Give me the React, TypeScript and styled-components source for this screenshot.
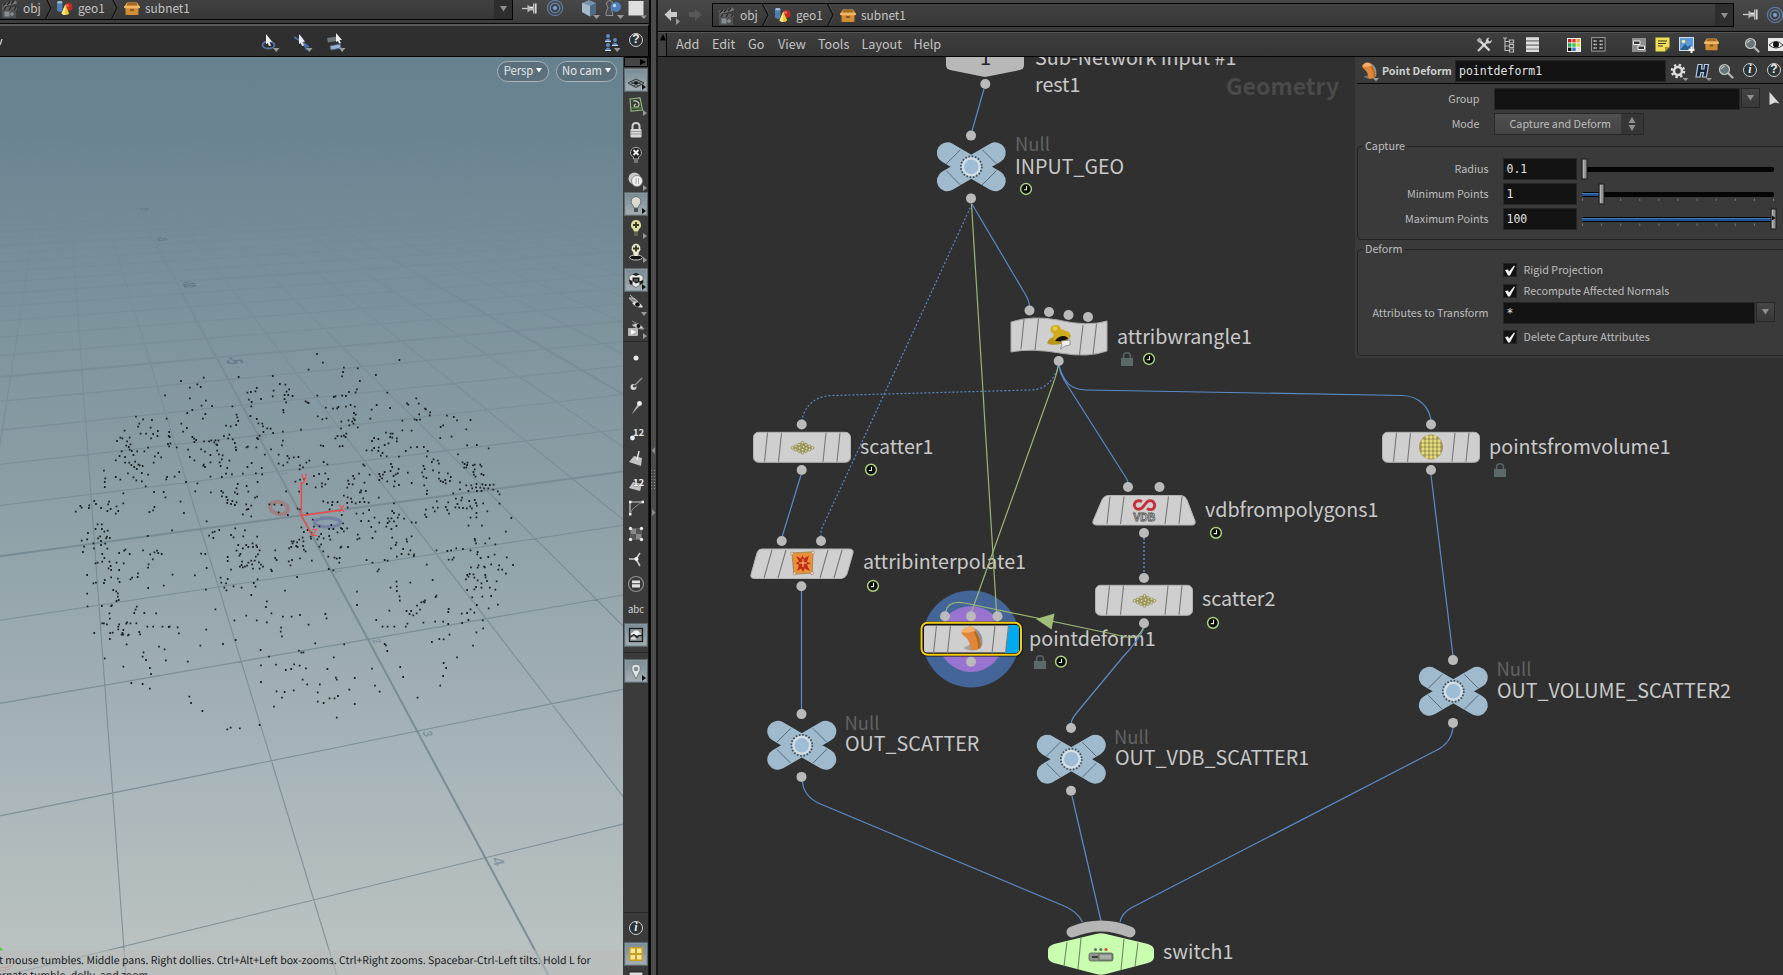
import React from "react";
import styled, { createGlobalStyle, css } from "styled-components";

const UI_FONT = `"Noto Sans CJK SC", "Noto Sans CJK JP", "Open Sans", sans-serif`;
const MONO_FONT = `"DejaVu Sans Mono", "Liberation Mono", monospace`;

const Global = createGlobalStyle`
  html, body { margin: 0; background: #303030; overflow: hidden; }
  * { box-sizing: border-box; }
  svg { display: block; }
`;

/* ---------- frame ---------- */
const Frame = styled.div`
  display: flex;
  width: 1783px;
  height: 975px;
  overflow: hidden;
  font-family: ${UI_FONT};
  color: #c4c4c4;
  background: #303030;
`;
const LeftPane = styled.section`
  width: 649px;
  flex: none;
  display: flex;
  flex-direction: column;
  background: #3a3a3a;
`;
const Splitter = styled.div`
  width: 9px;
  flex: none;
  background: #4b4b4b;
  border-left: 2px solid #080808;
  border-right: 2px solid #161616;
  display: flex;
  flex-direction: column;
  align-items: center;
  padding-top: 446px;
`;
const RightPane = styled.section`
  flex: 1;
  min-width: 0;
  display: flex;
  flex-direction: column;
`;

/* ---------- path bars ---------- */
const PathBar = styled.header<{ $h: number }>`
  height: ${(p) => p.$h}px;
  flex: none;
  display: flex;
  align-items: flex-start;
  background: linear-gradient(#484848, #3c3c3c);
  border-bottom: 1px solid #0a0a0a;
  overflow: hidden;
`;
const PathField = styled.div<{ $w: number; $top: number; $ml: number }>`
  display: flex;
  align-items: center;
  width: ${(p) => p.$w}px;
  height: 24px;
  flex: none;
  margin: ${(p) => p.$top}px 0 0 ${(p) => p.$ml}px;
  border: 1px solid #050505;
  background: linear-gradient(#424242, #373737);
  font-size: 11.9px;
  line-height: 18px;
  white-space: nowrap;
`;
const Crumb = styled.div<{ $w: number; $pl: number }>`
  display: flex;
  align-items: center;
  gap: 5px;
  width: ${(p) => p.$w}px;
  padding-left: ${(p) => p.$pl}px;
  flex: none;
`;
const CrumbText = styled.span`
  margin-bottom: 1px;
`;
const Drop = styled.div`
  margin-left: auto;
  width: 18px;
  height: 100%;
  background: #2e2e2e;
  display: flex;
  align-items: center;
  justify-content: center;
`;
const IconSlot = styled.div<{ $ml?: number; $mt?: number }>`
  flex: none;
  margin-left: ${(p) => p.$ml ?? 0}px;
  margin-top: ${(p) => p.$mt ?? 0}px;
`;

/* ---------- left pane ---------- */
const SelectBar = styled.div`
  height: 33px;
  flex: none;
  display: flex;
  background: #2f2f2f;
  border-top: 2px solid #5a5a5a;
  border-bottom: 1px solid #050505;
  border-right: 1px solid #050505;
  overflow: hidden;
`;
const ViewRow = styled.div`
  flex: 1;
  display: flex;
  min-height: 0;
`;
const Viewport = styled.div`
  width: 623px;
  flex: none;
  display: flex;
  flex-direction: column;
  justify-content: space-between;
  position: relative;
  overflow: hidden;
  background: linear-gradient(#67818e 0%, #6a8491 8%, #748d98 20%, #7f959e 31%, #8c9ea6 48%, #9aa9af 62%, #a8b5ba 78%, #b2bcbd 88%, #bcc3c3 100%);
`;
const Scene = styled.svg`
  position: absolute;
  inset: 0;
`;
const CamRow = styled.div`
  position: relative;
  display: flex;
  justify-content: flex-end;
  gap: 7px;
  padding: 4px 6px 0 0;
`;
const CamPill = styled.div<{ $w: number }>`
  width: ${(p) => p.$w}px;
  height: 21px;
  border: 1.5px solid #a9b4b9;
  border-radius: 11px;
  background: rgba(80, 98, 108, 0.55);
  color: #e4e8ea;
  font-size: 11.3px;
  line-height: 16px;
  padding-bottom: 3px;
  display: flex;
  align-items: center;
  justify-content: center;
  gap: 3px;
  white-space: nowrap;
`;
const Hint = styled.div`
  position: relative;
  height: 25px;
  overflow: hidden;
  background: rgba(184, 188, 186, 0.55);
  color: #16191a;
  font-size: 10.5px;
  text-rendering: geometricPrecision;
  line-height: 15px;
  padding-top: 3px;
  white-space: nowrap;
`;
const HintLine = styled.div<{ $x: number }>`
  margin-left: ${(p) => p.$x}px;
`;
const Tools = styled.div`
  width: 26px;
  flex: none;
  display: flex;
  flex-direction: column;
  background: #3b3b3b;
  border-right: 1px solid #161616;
  padding-left: 1px;
  overflow: hidden;
`;
const ToolHead = styled.div`
  height: 10px;
  flex: none;
  border: 1px solid #0a0a0a;
  background: #454545;
  display: flex;
  justify-content: flex-end;
  align-items: center;
`;
const Tool = styled.div<{ $gap?: number; $on?: boolean }>`
  position: relative;
  height: 24px;
  flex: none;
  margin-top: ${(p) => p.$gap ?? 1}px;
  width: 24px;
  display: flex;
  align-items: center;
  justify-content: center;
  ${(p) =>
    p.$on &&
    css`
      background: linear-gradient(#788b96, #a5b0b4);
      border: 1px solid #5d676c;
      box-shadow: inset 0 0 0 1px #8898a0;
    `}
`;
const Caret = styled.i<{ $dir?: "r" | "d"; $dark?: boolean }>`
  position: absolute;
  right: 1px;
  bottom: ${(p) => (p.$dir === "d" ? -1 : 1)}px;
  width: 0;
  height: 0;
  ${(p) =>
    p.$dir === "d"
      ? css`
          border: 3px solid transparent;
          border-top: 4px solid #9a9a9a;
          border-bottom: 0;
        `
      : css`
          border: 3px solid transparent;
          border-left: 4px solid ${p.$dark ? "#141414" : "#9a9a9a"};
          border-right: 0;
        `}
`;
const ToolRule = styled.div<{ $mt: number }>`
  height: 1px;
  flex: none;
  margin-top: ${(p) => p.$mt}px;
  background: #282828;
`;
const ToolText = styled.span`
  font-size: 9.6px;
  line-height: 14px;
  color: #d2d2d2;
`;

/* ---------- network pane ---------- */
const MenuBar = styled.nav`
  height: 25px;
  flex: none;
  display: flex;
  align-items: center;
  background: linear-gradient(#3e3e3e, #353535);
  border-bottom: 1px solid #050505;
  border-top: 1px solid #555;
  font-size: 12.6px;
  line-height: 18px;
`;
const MenuGrip = styled.div`
  width: 10px;
  height: 100%;
  border-right: 1px solid #080808;
  background: #404040;
  padding: 1px 0 0 2px;
`;
const MenuItem = styled.span<{ $w: number }>`
  width: ${(p) => p.$w}px;
  flex: none;
  margin-bottom: 1px;
`;
const Canvas = styled.div`
  flex: 1;
  position: relative;
  overflow: hidden;
  background: #303030;
`;
const Wires = styled.svg`
  position: absolute;
  left: -658px;
  top: -57px;
`;
const Label = styled.span<{ $x: number; $b: number; $tone?: "dim" | "ctx" }>`
  position: absolute;
  left: ${(p) => p.$x - 658}px;
  top: ${(p) => p.$b - 57 - (p.$tone === "ctx" ? 24 : 22.6)}px;
  font-size: ${(p) => (p.$tone === "dim" ? 18.4 : p.$tone === "ctx" ? 23.1 : 19.7)}px;
  font-weight: ${(p) => (p.$tone === "ctx" ? 700 : 400)};
  line-height: 28px;
  color: ${(p) => (p.$tone === "dim" ? "#626262" : p.$tone === "ctx" ? "#4a4a4a" : "#c9c9c9")};
  white-space: nowrap;
`;

/* ---------- parameter panel ---------- */
const Panel = styled.aside`
  position: absolute;
  left: 697px;
  top: 0;
  width: 428px;
  height: 301px;
  background: #3a3a3a;
  padding-left: 2px;
  font-size: 10.75px;
  line-height: 16px;
  color: #bdbdbd;
`;
const PanelHead = styled.div`
  height: 27px;
  display: flex;
  align-items: flex-start;
  border-bottom: 1px solid #070707;
`;
const PanelTitle = styled.b`
  width: 73px;
  margin: 6px 0 0 2px;
  color: #d0d0d0;
  font-size: 10.7px;
  white-space: nowrap;
`;
const Input = styled.div<{ $w: number; $h?: number }>`
  width: ${(p) => p.$w}px;
  height: ${(p) => p.$h ?? 22}px;
  flex: none;
  background: #131313;
  border: 1px solid #262626;
  color: #e2e2e2;
  font-family: ${MONO_FONT};
  font-size: 11.5px;
  line-height: 20px;
  padding-left: 3px;
`;
const Row = styled.div<{ $h: number; $mt?: number }>`
  display: flex;
  align-items: center;
  height: ${(p) => p.$h}px;
  margin-top: ${(p) => p.$mt ?? 0}px;
`;
const Name = styled.span<{ $w: number; $gap: number }>`
  width: ${(p) => p.$w}px;
  margin-right: ${(p) => p.$gap}px;
  flex: none;
  text-align: right;
  white-space: nowrap;
`;
const SmallButton = styled.div`
  width: 19px;
  height: 20px;
  flex: none;
  margin: 0 0 3px 1px;
  border: 1px solid #272727;
  background: linear-gradient(#454545, #383838);
  display: flex;
  align-items: center;
  justify-content: center;
`;
const Combo = styled.div`
  width: 150px;
  height: 22px;
  border: 1px solid #282828;
  background: linear-gradient(#505050, #434343);
  display: flex;
  align-items: center;
  justify-content: space-between;
  padding-left: 15px;
`;
const ComboStep = styled.div`
  width: 22px;
  height: 100%;
  background: #363636;
  display: flex;
  align-items: center;
  justify-content: center;
`;
const Group = styled.fieldset<{ $h: number; $mt: number }>`
  margin: ${(p) => p.$mt}px -6px 0 0;
  height: ${(p) => p.$h}px;
  padding: 0;
  border: 1px solid #222;
  border-radius: 4px;
  min-width: 0;
`;
const Legend = styled.legend`
  margin-left: 5px;
  padding: 0 2px;
  height: 15px;
  line-height: 14px;
`;
const Slider = styled.div`
  width: 198px;
  height: 22px;
  margin-left: 4px;
  flex: none;
`;
const Check = styled.div`
  width: 14px;
  height: 14px;
  flex: none;
  background: #121212;
  border: 1px solid #232323;
  margin-right: 7px;
`;

/* ---------- shared glyphs ---------- */
const Down = ({ s = 7, c = "#8f8f8f" }: { s?: number; c?: string }) => (
  <svg width={s} height={s}>
    <path d={`M0 1H${s}L${s / 2} ${s - 0.5}Z`} fill={c} />
  </svg>
);
const ObjIcon = () => (
  <svg width="17" height="19" viewBox="0 0 17 19">
    <path d="M1 5L15 1.5L16 4.5L2 8Z" fill="#777" />
    <path d="M2 6.5L5 4M6 6L9 3M10 5L13 2" stroke="#222" strokeWidth="1.4" />
    <rect x="1" y="8" width="15" height="3" fill="#5e5e5e" />
    <path d="M3 11L5 8M8 11L10 8M13 11L15 8" stroke="#222" strokeWidth="1.2" />
    <rect x="1" y="11" width="14" height="8" fill="#4e5254" />
    <rect x="3.5" y="12.5" width="5" height="5" fill="#888f92" />
    <path d="M9 15H13M11 13V17" stroke="#8b9194" strokeWidth="1.4" />
  </svg>
);
const GeoIcon = () => (
  <svg width="17" height="16" viewBox="0 0 17 16">
    <path d="M1 2.5Q3.5 0 6.5 2V11Q4 13 1 10.5Z" fill="#4d7fb5" />
    <ellipse cx="3.8" cy="2.3" rx="2.7" ry="1.3" fill="#9fc0de" />
    <circle cx="12.5" cy="7" r="4" fill="#c22d22" />
    <circle cx="11.5" cy="5.5" r="1.3" fill="#e57e70" />
    <path d="M9.3 4.5L13.2 13.5Q9.5 16.5 5.5 13.5Z" fill="#edc932" />
    <path d="M9.3 4.5L9 15Q7 15 5.5 13.5Z" fill="#f7e68a" />
  </svg>
);
const BoxIcon = ({ w = 16 }: { w?: number }) => (
  <svg width={w} height={(w * 13) / 16} viewBox="0 0 16 13">
    <path d="M3 0.5H13L16 5H0Z" fill="#e7aa56" />
    <path d="M3.5 1H12.5L13.5 3.5H2.5Z" fill="#a8671e" />
    <rect x="1.5" y="5" width="13" height="8" rx="1" fill="#d18d34" />
    <rect x="0" y="4" width="16" height="2.3" rx="1" fill="#efb766" />
    <rect x="6" y="7" width="4" height="2" rx="0.8" fill="#8a531c" />
  </svg>
);
const Chevron = () => (
  <svg width="7" height="22">
    <path d="M0.5 0L6 11L0.5 22" fill="none" stroke="#111" strokeWidth="1.3" />
    <path d="M1.8 0L7.3 11L1.8 22" fill="none" stroke="#555" strokeWidth="0.6" />
  </svg>
);
const PinIcon = () => (
  <svg width="17" height="13" viewBox="0 0 17 13">
    <path d="M0 6.5H6" stroke="#ccc" strokeWidth="1.3" />
    <path d="M5.5 2.5V10.5L8 8.5H11V11.5H12.5V1.5H11V4.5H8Z" fill="#b9b9b9" />
    <path d="M13.8 1.5V11.5" stroke="#d8d8d8" strokeWidth="1.6" />
    <path d="M8 5.5H11" stroke="#eee" />
  </svg>
);
const TargetIcon = () => (
  <svg width="18" height="18" viewBox="0 0 18 18" fill="none">
    <circle cx="9" cy="9" r="7.6" stroke="#5d7ba3" strokeWidth="1.2" />
    <circle cx="9" cy="9" r="4.8" stroke="#6286b5" strokeWidth="1.3" />
    <circle cx="9" cy="9" r="2" fill="#79a3d8" />
  </svg>
);
const Magnifier = () => (
  <svg width="16" height="16" viewBox="0 0 16 16">
    <path d="M9.5 9.5L14.5 14.5" stroke="#b5b5b5" strokeWidth="2.2" strokeLinecap="round" />
    <circle cx="6.5" cy="6.5" r="5" fill="#66757a" stroke="#c9c9c9" strokeWidth="1.2" />
    <path d="M3.6 6Q4 3.7 6.5 3.4" stroke="#dfe8ea" fill="none" />
  </svg>
);
const RoundGlyph = styled.div<{ $italic?: boolean }>`
  width: 14px;
  height: 14px;
  border-radius: 50%;
  border: 1.3px solid #d0d0d0;
  background: #2b3336;
  color: #eee;
  font-family: ${(p) => (p.$italic ? `"Liberation Serif", serif` : `"Liberation Sans", sans-serif`)};
  font-style: ${(p) => (p.$italic ? "italic" : "normal")};
  font-size: 12px;
  font-weight: 700;
  line-height: 11px;
  text-align: center;
`;

/* ---------- 3D view ---------- */
type P = [number, number];
const W = (x: number, z: number) => 1 + 0.0275 * x - 0.1081 * z;
const project = (x: number, z: number): P => {
  const w = W(x, z);
  return [(301.3 + 106 * x - 6.46 * z) / w, (515.3 + 0.9 * x - 7.1 * z) / w - 57];
};
const seg = (a: P, b: P) => `M${a[0].toFixed(1)} ${a[1].toFixed(1)}L${b[0].toFixed(1)} ${b[1].toFixed(1)}`;
let minor = "";
let major = "";
for (let x = -25; x <= 90; x++) {
  const near = Math.min(7, (0.9 + 0.0275 * x) / 0.1081);
  const d = seg(project(x, -110), project(x, near));
  if (x % 5 === 0) major += d;
  else minor += d;
}
for (let z = -75; z <= 6; z++) {
  const left = Math.max(-25, (0.1081 * z - 0.9) / 0.0275);
  const d = seg(project(left, z), project(100, z));
  if (z % 5 === 0) major += d;
  else minor += d;
}

const SAMPLES =
  "753,72 767,98 949,90 733,119 817,113 850,115 893,135 815,126 813,139 648,138 567,141 484,143 430,153 469,163 477,171 451,173 392,196 451,205 489,212 855,153 848,178 845,187 829,186 920,188 665,162 678,164 687,178 681,185 685,195 676,207 680,217 650,182 648,199 610,174 607,184 596,186 588,188 591,209 598,216 597,229 620,207 695,198 676,195 730,217 726,214 733,219 754,197 793,201 797,199 813,197 822,198 989,205 967,220 970,224 995,221 1010,236 1012,238 1022,247 1021,256 1062,257 1078,261 1086,271 1118,270 1108,298 1073,320 1053,286 1047,291 1046,324 504,228 479,227 457,240 445,249 488,252 482,266 552,229 595,258 562,254 564,262 566,273 561,285 610,267 614,280 623,281 625,289 635,295 643,296 649,309 626,306 617,317 611,324 613,327 673,240 674,247 672,305 715,299 672,332 670,346 683,378 644,358 662,374 629,374 609,352 589,350 545,314 548,289 537,287 532,318 542,325 553,328 558,339 560,352 561,360 586,352 323,260 340,268 361,270 331,281 328,290 358,293 396,266 431,281 444,294 435,305 402,306 375,303 364,312 374,318 359,325 347,311 334,311 296,302 286,323 291,325 308,323 278,333 302,334 310,343 306,351 308,359 313,363 300,347 289,364 284,378 297,381 317,375 326,364 352,353 343,364 376,369 368,379 383,382 365,398 339,408 329,404 332,406 321,395 319,411 325,417 312,405 307,398 297,398 275,391 247,422 250,445 249,456 249,471 275,441 286,449 304,430 317,442 337,429 324,451 337,454 346,469 352,434 399,342 402,349 405,340 403,321 401,318 420,352 447,359 451,381 462,336 457,321 461,326 466,330 485,334 502,331 512,331 497,334 509,337 514,343 516,345 519,332 478,358 487,365 516,362 529,376 500,375 520,373 527,388 522,397 500,397 524,408 545,392 540,414 487,411 483,407 484,404 462,391 426,426 415,440 397,441 395,448 442,456 469,460 464,484 500,440 527,441 537,431 551,433 577,431 588,411 598,399 622,414 623,433 608,430 612,456 586,468 590,485 611,500 606,503 565,462 562,475 558,487 564,492 530,488 526,483 501,487 527,499 538,501 541,510 540,519 552,513 549,522 562,517 558,525 585,523 597,527 590,537 577,553 597,559 586,539 755,259 766,268 776,265 774,233 791,236 801,235 804,231 833,225 822,230 843,230 841,249 845,254 840,265 843,270 828,271 837,275 840,281 830,286 850,292 811,275 810,295 817,317 823,311 821,321 811,319 802,318 797,325 762,346 768,348 807,349 814,348 883,239 880,266 895,225 927,234 985,268 990,270 998,269 996,253 956,272 956,301 978,302 917,308 928,311 933,311 927,321 932,323 943,325 943,334 899,327 889,324 884,333 923,340 914,345 900,352 889,354 884,361 899,363 909,369 905,377 871,361 919,379 948,380 964,363 976,352 991,351 1007,351 1016,363 1014,379 1026,396 1030,388 1040,392 1043,401 1006,408 1009,417 1003,427 1029,421 1043,428 1064,430 1110,346 1133,345 1161,355 1088,373 1099,397 1104,402 1111,398 1108,412 1103,413 1110,405 1124,406 1128,404 1141,404 1144,409 1128,418 1125,426 1126,434 1130,440 1144,432 1149,435 1013,444 1006,440 1008,466 1015,482 1014,492 1043,446 1047,453 1053,456 1059,460 1058,450 1069,453 1071,441 1093,457 1108,466 1120,466 1132,462 1146,463 1154,465 1131,472 1141,473 1150,475 1144,483 1160,475 1164,465 1173,464 1172,479 1183,484 1187,493 1122,475 1133,483 1113,483 1093,478 1077,490 1098,503 1187,521 1083,506 1096,511 1087,522 1082,532 1091,533 1100,534 1109,535 1117,529 1121,535 1115,513 1128,510 1131,519 1133,527 1148,520 1065,517 1038,514 1059,531 1063,540 1040,533 1029,533 1033,544 1012,539 1067,551 1132,549 1158,544 1132,562 1118,563 1113,587 1215,564 1202,605 1145,587 929,402 932,411 928,423 914,426 947,417 969,428 945,430 940,433 935,438 910,434 901,432 903,439 908,445 901,450 920,454 938,454 936,469 978,459 948,465 900,503 863,403 866,407 878,434 853,431 839,438 842,446 827,452 829,462 838,463 866,458 825,473 858,481 857,487 869,483 817,497 826,502 834,506 855,487 863,505 866,516 855,516 876,518 845,520 836,516 826,533 825,519 802,516 790,516 789,525 779,518 768,514 783,538 769,396 778,403 773,430 758,432 746,438 780,447 773,463 765,460 765,470 750,472 729,462 713,449 723,447 702,455 712,418 720,412 713,406 709,381 698,382 735,392 728,398 687,385 683,397 673,406 662,401 680,484 711,485 652,524 669,525 640,523 662,547 684,555 707,536 713,538 730,550 743,569 746,590 759,589 731,600 740,608 738,620 787,585 782,597 792,597 810,594 813,597 815,580 825,595 817,604 802,607 763,612 782,618 769,625 785,629 754,628 758,620 763,643 759,650 739,626 719,623 722,606 716,592 812,555 847,551 863,550 877,540 858,573 850,614 854,625 876,573 890,563 882,591 892,605 901,578 936,520 932,543 936,549 922,565 930,565 948,554 945,563 960,566 936,574 925,574 921,579 918,590 942,588 930,597 978,577 988,578 1010,554 1013,561 932,623 942,638 940,645 929,655 966,628 967,635 885,624 849,628 978,619 293,490 259,515 224,513 228,522 212,526 191,528 211,534 194,533 180,545 240,534 257,523 255,543 263,537 277,529 281,543 275,551 293,520 366,486 389,486 393,502 429,515 367,531 364,541 355,546 437,549 409,601 491,574 521,600 510,605 505,607 497,617 507,624 559,595 549,615 555,622 578,619 582,601 232,583 242,583 242,597 227,597 209,609 256,602 248,605 238,619 254,620 233,625 252,625 261,624 240,633 240,645 207,628 194,632 222,640 200,650 197,666 223,655 250,641 255,656 243,672 248,684 283,669 295,662 298,659 308,672 294,700 277,698 260,695 263,708 258,715 264,720 283,720 243,695 227,700 232,698 207,735 222,760 228,758 249,750 247,759 264,742 280,746 284,756 269,780 276,784 280,790 282,810 207,791 208,829 351,618 340,661 357,673 367,667 373,662 376,669 384,672 363,688 352,713 353,703 327,741 328,730 310,748 314,743 352,774 389,767 410,734 463,736 478,671 488,672 491,714 489,779 524,743 526,758 537,760 541,747 533,773 538,781 555,769 574,773 603,759 612,748 607,770 597,795 549,719 541,693 541,681 570,710 574,705 575,695 577,712 582,710 587,707 590,698 597,692 599,703 601,716 605,692 620,704 617,716 625,710 615,697 608,680 613,673 617,661 611,651 601,651 590,651 585,645 577,655 562,662 569,677 571,672 566,645 600,640 611,620 609,646 654,661 654,684 657,690 686,694 694,690 690,706 646,723 644,719 706,741 677,782 741,692 713,685 687,655 692,651 693,634 698,634 706,637 711,629 707,651 704,648 720,648 721,634 722,659 726,664 695,640 781,717 792,721 795,683 807,684 800,686 806,698 780,680 768,664 827,651 811,650 809,653 871,690 885,698 900,718 897,724 914,690 943,680 954,672 958,657 971,673 984,673 983,678 921,692 975,661 1037,661 1063,663 1066,689 1078,683 1084,655 1072,661 1100,657 1118,661 1135,666 1131,640 1128,627 1129,632 1153,640 1163,625 1177,643 1014,704 1075,689 1134,673 1142,684 1160,681 1175,674 1204,682 1219,705 1186,706 1184,719 1193,719 1202,731 1167,703 1150,710 1152,712 1153,735 1137,706 1135,713 1119,712 1116,732 1113,740 1107,748 1110,735 1125,733 1127,743 1135,751 1154,742 1157,753 1144,760 1180,754 1177,779 1164,773 1144,773 1127,778 1131,771 1110,780 1122,802 1146,800 1167,798 1183,824 1161,835 1133,825 1118,838 1127,848 1147,871 1113,870 1110,849 1098,879 1097,851 1066,837 1065,846 1065,882 1148,895 1132,907 1068,914 1124,947 1028,750 975,758 942,755 943,769 928,773 943,783 949,799 950,812 925,842 966,843 977,843 982,856 973,852 990,850 998,839 991,827 1001,817 1006,815 1010,811 1009,817 1037,797 1035,801 1034,875 1053,875 1006,878 968,881 964,890 937,890 921,890 909,890 894,870 848,785 848,825 280,800 277,813 242,828 264,828 266,826 325,830 322,839 319,849 343,849 371,850 260,850 261,866 247,880 243,880 254,883 283,883 281,890 300,881 302,877 310,880 324,880 281,898 293,900 289,914 293,914 304,916 306,914 291,909 268,908 262,909 261,927 224,909 301,943 331,906 333,913 350,890 364,890 386,890 403,890 401,891 422,892 425,910 378,950 391,958 512,838 490,899 557,871 560,930 530,942 476,947 634,814 632,831 585,857 610,871 645,850 672,860 693,860 713,855 733,884 773,852 776,865 634,877 668,893 667,905 670,919 619,960 749,940 818,943 914,942 917,946 920,963 1026,936 1044,927 1054,928 710,962 716,968 721,967 341,967 339,980 347,990 249,985 639,980 793,982 1086,982";
const LOWER =
  "394,46 446,50 293,65 356,69 359,87 312,114 339,117 356,131 450,155 454,174 481,198 540,253 548,248 570,250 617,240 800,218 620,61 656,59 679,75 692,72 699,58 712,62 727,70 778,72 884,71 951,66 958,96 1054,54 1060,69 1053,93 1046,122 992,158 902,140 891,122 843,99 830,134 843,177 798,98 800,104 803,153 795,160 783,160 769,174 755,170 755,142 760,118 730,118 719,104 657,139 676,141 698,136 670,158 651,185 620,111";
const dots = (list: string, y0: number) =>
  list
    .split(" ")
    .map((s) => {
      const [x, y] = s.split(",").map(Number);
      return `M${(x / 2.376 - 0.85).toFixed(1)} ${(y / 3 + y0 - 0.9).toFixed(1)}h1.7v1.8h-1.7z`;
    })
    .join("");
const POINTS = dots(SAMPLES, 273) + dots(LOWER, 588);

/* a number lying on the ground plane next to the z axis, read along +z */
const GroundNum = ({ z, k, t, c = "#6a7f91", o: alpha = 0.8 }: { z: number; k: number; t: string; c?: string; o?: number }) => {
  const x0 = k * 3;
  const z0 = z + k * 1.5;
  const o = project(x0, z0);
  const dz = project(x0, z0 + 0.1);
  const dx = project(x0 + 0.1, z0);
  const m = [(dz[0] - o[0]) * 10 * k, (dz[1] - o[1]) * 10 * k, (o[0] - dx[0]) * 10 * k, (o[1] - dx[1]) * 10 * k, o[0], o[1]];
  return (
    <text
      transform={`matrix(${m.map((v) => v.toFixed(4)).join(" ")})`}
      fontSize="10"
      fontFamily="Liberation Sans"
      fontWeight="bold"
      fill={c}
      opacity={alpha}
    >
      {t}
    </text>
  );
};

const View3D = () => (
  <Scene width="623" height="918" viewBox="0 0 623 918">
    <defs>
      <linearGradient id="haze" x1="0" y1="0" x2="0" y2="918" gradientUnits="userSpaceOnUse">
        <stop offset="0.085" stopColor="#fff" stopOpacity="0" />
        <stop offset="0.13" stopColor="#fff" stopOpacity="0.28" />
        <stop offset="0.25" stopColor="#fff" stopOpacity="0.6" />
        <stop offset="0.5" stopColor="#fff" stopOpacity="1" />
      </linearGradient>
      <mask id="fade">
        <rect width="623" height="918" fill="url(#haze)" />
      </mask>
    </defs>
    <g mask="url(#fade)" fill="none" stroke="#748892">
      <path d={minor} strokeWidth="1.1" opacity="0.85" />
      <path d={major} strokeWidth="2" opacity="0.9" />
    </g>
    <GroundNum z={-20} k={0.036} t="-20" c="#546c79" />
    <GroundNum z={-15} k={0.036} t="-15" c="#546c79" />
    <GroundNum z={-10} k={0.036} t="-10" c="#566e7d" />
    <GroundNum z={-5} k={0.036} t="-5" c="#5d7389" />
    {[-4, -3, -2, -1, 1, 2, 3, 4].map((z) => (
      <GroundNum key={z} z={z} k={0.0092} t={String(z)} o={0.6} />
    ))}
    <ellipse cx="279" cy="451" rx="9" ry="6" fill="none" stroke="#a8706f" strokeWidth="4" opacity="0.65" transform="rotate(14 279 451)" />
    <ellipse cx="327.5" cy="465.5" rx="13" ry="4.5" fill="none" stroke="#6a71a0" strokeWidth="3.4" opacity="0.65" />
    <path d={POINTS} fill="#1c2022" />
    <g stroke="#f04b4b" strokeWidth="1.5" fill="none">
      <path d="M301.3 425V458.6L342 453M301.3 458.6L312 478" />
    </g>
    <g fill="#f04b4b" fontSize="12" fontFamily="Liberation Sans">
      <text x="301.5" y="424">y</text>
      <text x="339" y="455">x</text>
      <text x="312" y="479">z</text>
    </g>
    <path d="M0 911Q16 910 16 903M0 914L10 912" stroke="#d9746c" fill="none" />
    <path d="M0 890L3 893L0 894" fill="#35d43c" />
  </Scene>
);

/* ---------- viewport toolbar glyphs ---------- */
const G: Record<string, React.ReactNode> = {
  plane: (
    <g fill="none" stroke="#35393b" strokeWidth="1">
      <path d="M1 12L9 8L17 12L9 16.5Z" />
      <path d="M3.7 13.5L11.7 9.4M6.3 15L14.3 10.7M3.7 10.7L11.7 15M6.3 9.4L14.3 13.5" />
      <path d="M7.5 12H10.5" stroke="#111" strokeWidth="2" />
    </g>
  ),
  cplane: (
    <g fill="none" stroke="#8fba7d" strokeWidth="1.2">
      <path d="M3 3L13 2L15.5 14L4 15Z" />
      <path d="M6 5Q11 4 12 8Q12 12 8 11Q6 9 9 8" stroke="#b7d6a6" />
      <path d="M4 12H14" stroke="#5e8950" />
    </g>
  ),
  lock: (
    <g>
      <path d="M5.5 8V5.5Q5.5 2 9 2T12.5 5.5V8" fill="none" stroke="#cfcfcf" strokeWidth="2" />
      <rect x="3.5" y="8" width="11" height="8.5" rx="1" fill="#d8d8d8" />
      <path d="M4 10.5H14M4 13H14" stroke="#9d9d9d" />
    </g>
  ),
  bulbx: (
    <g>
      <path d="M9 1.5A5 5 0 0 1 11.5 11V13H6.5V11A5 5 0 0 1 9 1.5Z" fill="#222" stroke="#aaa" />
      <path d="M6.5 4L11.5 9M11.5 4L6.5 9" stroke="#eee" strokeWidth="1.8" />
      <rect x="7" y="13" width="4" height="4" fill="#777" />
    </g>
  ),
  sphere: (
    <g>
      <circle cx="7.5" cy="7.5" r="6" fill="#c9c9c9" />
      <circle cx="10" cy="10" r="5.5" fill="#efefef" stroke="#7c7c7c" strokeWidth="0.8" />
      <path d="M9 7V13M11.5 7V13" stroke="#aaa" />
    </g>
  ),
  bulb: (
    <g>
      <path d="M9 1.5A5 5 0 0 1 12 10.5L11 13H7L6 10.5A5 5 0 0 1 9 1.5Z" fill="#dadacf" stroke="#5c6468" strokeWidth="0.9" />
      <rect x="7" y="13" width="4" height="4" fill="#4c5458" />
    </g>
  ),
  bulbp: (
    <g>
      <path d="M9 1A5 5 0 0 1 12 10L11 12.5H7L6 10A5 5 0 0 1 9 1Z" fill="#dedf9e" />
      <path d="M9 3V9M6 6H12" stroke="#33351f" strokeWidth="1.8" />
      <rect x="7" y="13" width="4" height="4" fill="#62634c" />
    </g>
  ),
  bulbs: (
    <g>
      <ellipse cx="9" cy="14.5" rx="6.5" ry="2.5" fill="#111" stroke="#c4c4c4" />
      <path d="M9 0.5A5 5 0 0 1 12 9L11 13H7L6 9A5 5 0 0 1 9 0.5Z" fill="#e6e7c6" />
      <path d="M9 2.5V8.5M6 5.5H12" stroke="#33351f" strokeWidth="1.8" />
    </g>
  ),
  cube: (
    <g>
      <path d="M2 5L9 2L16 5V12L9 16.5L3 13Z" fill="#e9e9e9" stroke="#4c4c4c" strokeWidth="0.6" />
      <path d="M9 2L12.5 3.5L9 5L5.5 3.5ZM5.5 6.5L12.5 6.5V11L9 12.5L5.5 10ZM2 8.5L5.5 10V14L3 13ZM12.5 10.5L16 9V12L12.5 14Z" fill="#1b1b1b" />
      <path d="M7 8H11V10.5H7Z" fill="#55585a" />
    </g>
  ),
  eyes: (
    <g>
      <path d="M3 1L8 5.5M2 4Q8 3 11 8Q5 9 2 4Z" fill="#8a8a8a" stroke="#bbb" />
      <path d="M5 9Q11 5 16 13Q10 15 5 9Z" fill="#ddd" />
      <circle cx="10.5" cy="10.5" r="2.3" fill="#111" />
    </g>
  ),
  eyecam: (
    <g>
      <path d="M5 2L13 6M5 6Q12 2 17 10Q10 11 5 6Z" fill="#ddd" stroke="#888" />
      <circle cx="11.5" cy="7" r="2" fill="#111" />
      <rect x="1" y="9" width="10" height="8" rx="1" fill="#b6b6b6" />
      <path d="M4 10.5L9 13L4 15.5Z" fill="#fff" />
    </g>
  ),
  dot: <circle cx="9" cy="9" r="2.5" fill="#e8e8e8" />,
  norm: (
    <g>
      <path d="M7 11L15 3" stroke="#999" strokeWidth="1.3" />
      <circle cx="6.5" cy="12" r="3" fill="#d8d8d8" />
      <circle cx="7.5" cy="11" r="1.6" fill="#444" />
    </g>
  ),
  seg: (
    <g>
      <path d="M4.5 15.5L11 4.5L13 6.5Z" fill="#b5b5b5" />
      <circle cx="12.5" cy="4.5" r="2.4" fill="#f2f2f2" />
    </g>
  ),
  n12: (
    <g>
      <circle cx="5.5" cy="14" r="2.4" fill="#eee" />
      <text x="6" y="11.5" fontSize="9.5" fontWeight="bold" fill="#e2e2e2" fontFamily="Noto Sans CJK SC">12</text>
    </g>
  ),
  prim: (
    <g>
      <path d="M2 12L7 6L15 8L14 16Z" fill="#c3c3c3" />
      <path d="M10 10L12 1" stroke="#eee" strokeWidth="1.4" />
    </g>
  ),
  prim12: (
    <g>
      <path d="M2 13L6 7L15 9L13 16Z" fill="#c3c3c3" />
      <text x="6" y="10.5" fontSize="9.5" fontWeight="bold" fill="#f0f0f0" stroke="#3b3b3b" strokeWidth="0.5" paintOrder="stroke" fontFamily="Noto Sans CJK SC">12</text>
    </g>
  ),
  hull: (
    <g>
      <path d="M3 15V3H16" stroke="#ccc" fill="none" strokeWidth="1.2" />
      <path d="M3 15Q6 7 16 3" stroke="#8f8f8f" fill="none" />
      <path d="M2 1.8H4.5V4.3H2ZM14.5 1.8H17V4.3H14.5ZM2 14H4.5V16.5H2Z" fill="#eee" />
    </g>
  ),
  tex: (
    <g>
      <path d="M3.5 3.5H14.5V14.5H3.5Z" fill="#8a8a8a" />
      <path d="M9 3.5H14.5V9H9ZM3.5 9H9V14.5H3.5Z" fill="#565656" />
      <circle cx="3.5" cy="3.5" r="1.7" fill="#e8e8e8" />
      <circle cx="14.5" cy="3.5" r="1.7" fill="#e8e8e8" />
      <circle cx="3.5" cy="14.5" r="1.7" fill="#e8e8e8" />
      <circle cx="14.5" cy="14.5" r="1.7" fill="#e8e8e8" />
    </g>
  ),
  tri: (
    <g stroke="#c8c8c8" strokeWidth="1.6">
      <path d="M9 9L2 9M9 9L13 3M9 9L13 16" />
      <circle cx="9.5" cy="9" r="2" fill="#fff" stroke="none" />
    </g>
  ),
  list: (
    <g>
      <circle cx="9" cy="9" r="7.5" fill="none" stroke="#8e8e8e" strokeWidth="1.2" />
      <path d="M5 5.5H13V8.3H5ZM5 9.3H13V12.5H5Z" fill="#e2e2e2" />
    </g>
  ),
  img: (
    <g>
      <rect x="2.5" y="2.5" width="13" height="13" fill="#8a9498" stroke="#1d1d1d" strokeWidth="1.3" />
      <path d="M4 9Q3.5 6 6 6.5Q7 4 9 4.5Q12 4 12 6.5Q14.5 7 14 9Z" fill="#f0f0f0" />
      <path d="M3 11L7 8.5L10 11.5L12 9.5H15" stroke="#222" fill="none" strokeWidth="1.3" />
      <path d="M4 12L7 10.5L10 13.5H4Z" fill="#ddd" />
    </g>
  ),
  pin: (
    <g>
      <path d="M9 17L5 8.5Q3.5 2.5 9 2.2Q14.5 2.5 13 8.5Z" fill="#e3e3e3" stroke="#6a7276" strokeWidth="0.8" />
      <circle cx="9" cy="7" r="2.2" fill="#7f8b90" />
    </g>
  ),
  quad: (
    <g>
      <rect x="2" y="2" width="14" height="14" rx="1" fill="#c89d22" />
      <path d="M3.5 3.5H8V8H3.5ZM10 3.5H14.5V8H10ZM3.5 10H8V14.5H3.5ZM10 10H14.5V14.5H10Z" fill="#f3e79a" />
    </g>
  ),
  more: <rect x="2" y="3" width="14" height="14" fill="#dcdcdc" stroke="#222" />,
};
const Glyph = ({ n }: { n: string }) => (
  <svg width="18" height="18" viewBox="0 0 18 18">
    {G[n]}
  </svg>
);
type ToolDef = { n: string; gap?: number; on?: boolean; caret?: "r" | "d" };
const TOOLS_A: ToolDef[] = [
  { n: "plane", on: true, caret: "r" },
  { n: "cplane", caret: "r" },
  { n: "lock" },
  { n: "bulbx" },
  { n: "sphere", caret: "r" },
  { n: "bulb", gap: 0, on: true, caret: "r" },
  { n: "bulbp", gap: 0, caret: "r" },
  { n: "bulbs", gap: 0, caret: "r" },
  { n: "cube", gap: 4, on: true, caret: "r" },
  { n: "eyes", gap: -1, caret: "d" },
  { n: "eyecam", caret: "r" },
];
const TOOLS_B: ToolDef[] = [
  { n: "dot", gap: 4 },
  { n: "norm", gap: 2 },
  { n: "seg", gap: 0 },
  { n: "n12" },
  { n: "prim", gap: 2 },
  { n: "prim12" },
  { n: "hull", gap: 0 },
  { n: "tex", gap: 2 },
  { n: "tri" },
  { n: "list" },
];
const ToolList = ({ items }: { items: ToolDef[] }) => (
  <>
    {items.map((t) => (
      <Tool key={t.n} $gap={t.gap} $on={t.on}>
        <Glyph n={t.n} />
        {t.caret && <Caret $dir={t.caret} $dark={t.on} />}
      </Tool>
    ))}
  </>
);

/* ---------- network drawing ---------- */
const Dot = ({ x, y }: { x: number; y: number }) => <circle cx={x} cy={y} r="5" fill="#bababa" />;
const Clock = ({ x, y }: { x: number; y: number }) => (
  <g>
    <circle cx={x} cy={y} r="5.4" fill="#0a0a0a" stroke="#a9d27c" strokeWidth="1.5" />
    <path d={`M${x + 0.5} ${y - 3}V${y + 0.8}H${x - 2.2}`} stroke="#e8f5d8" strokeWidth="1.1" fill="none" />
  </g>
);
const Padlock = ({ x, y }: { x: number; y: number }) => (
  <g>
    <path d={`M${x - 3.4} ${y}V${y - 3}Q${x - 3.4} ${y - 6.3} ${x} ${y - 6.3}T${x + 3.4} ${y - 3}V${y}`} fill="none" stroke="#566463" strokeWidth="1.6" />
    <rect x={x - 6} y={y - 1} width="12" height="8" fill="#5b6a69" />
  </g>
);
const NullNode = ({ x, y }: { x: number; y: number }) => (
  <g>
    <g stroke="#a0bacd" strokeWidth="21" strokeLinecap="round">
      <path d={`M${x - 24} ${y - 14}L${x + 24} ${y + 14}M${x + 24} ${y - 14}L${x - 24} ${y + 14}`} />
    </g>
    <path
      d={`M${x - 25} ${y - 3}L${x - 11} ${y - 17}M${x + 25} ${y - 3}L${x + 11} ${y - 17}M${x - 25} ${y + 4}L${x - 11} ${y + 18}M${x + 25} ${y + 4}L${x + 11} ${y + 18}`}
      stroke="#55697a"
      strokeWidth="1"
    />
    <circle cx={x} cy={y} r="8.5" fill="#9dbcd6" stroke="#d3dde4" strokeWidth="2.6" />
    <circle cx={x} cy={y} r="10.5" fill="none" stroke="#414d56" strokeWidth="1.8" strokeDasharray="1.6 1.7" />
    <Dot x={x - 0.3} y={y - 31.2} />
    <Dot x={x - 0.3} y={y + 31.6} />
  </g>
);
const Ticks = ({ x, y, slant = 3 }: { x: number; y: number; slant?: number }) => (
  <path
    d={[-37, -23, 21.5, 35.5].map((o) => `M${x + o + slant / 2} ${y - 14.5}L${x + o - slant / 2} ${y + 14.5}`).join("")}
    stroke="#777"
    strokeWidth="1.1"
  />
);
const SCATTER_BEADS = [
  [-10, 0], [-7, -1.5], [-7, 1.8], [-3.5, -3], [-3.5, 3.2], [0, -5], [0, 5], [3.5, -3],
  [3.5, 3.2], [7, -1.5], [7, 1.8], [10, 0], [-3, 0], [1, -1], [4, 0.5], [0, 2],
];
const Scatter = ({ x, y }: { x: number; y: number }) => (
  <g>
    <path d={`M${x - 10} ${y}L${x} ${y - 6}L${x + 10} ${y}L${x} ${y + 6}Z`} fill="#aba672" />
    <g fill="#dbd69c" stroke="#77733f" strokeWidth="0.6">
      {SCATTER_BEADS.map(([a, b], i) => (
        <circle key={i} cx={x + a} cy={y + b} r="1.4" />
      ))}
    </g>
  </g>
);
const Slab = ({ x, y }: { x: number; y: number }) => (
  <g>
    <rect x={x - 48.5} y={y - 15} width="97" height="30" rx="5" fill="#cfcfcf" stroke="#b4b4b4" />
    <Ticks x={x + 1} y={y} />
  </g>
);
const Tube = ({ x, y, k = 1 }: { x: number; y: number; k?: number }) => (
  <g transform={`translate(${x} ${y}) scale(${k})`}>
    <path d="M-8 9Q0 14 10 9L4 3Z" fill="#8e8e8e" opacity="0.7" />
    <path d="M0 -12Q12 -8 11 5Q10 9 7 10Z" fill="#8b97a3" />
    <path d="M-10 -7Q-8 -12 -1 -12.5Q3 -12 4 -8Q10 0 9 8Q5 13 -1 10.5Q-1 3 -6 -2Q-10 -4 -10 -7Z" fill="#df8638" />
    <path d="M-10 -7Q-5 -5 4 -8Q2 -13 -4 -12Q-8 -11 -10 -7Z" fill="#f5ad68" />
    <path d="M4 -8Q10 0 9 8L6.5 9.8Q7 1 2 -7Z" fill="#b9681f" />
  </g>
);

const Network = () => (
  <Wires width="1783" height="975" viewBox="0 0 1783 975">
    <circle cx="971" cy="639" r="48.5" fill="#436597" />
    <circle cx="971" cy="639" r="33" fill="#9873cf" />

    <g fill="none" stroke="#5a8ac8" strokeWidth="1.2">
      <path d="M984 89L972 131M972 204L1024 292Q1029 300 1029.5 306" />
      <path d="M1059 366C1064 382 1070 389.5 1086 390L1402 395.5C1420 396 1429 408 1431 420" />
      <path d="M1059 366Q1060 373 1064 380L1123 473Q1128 480 1128 483" />
      <path d="M801 475L782 537M801.5 591V710" />
      <path d="M1144 628Q1139 640 1122 658L1079 710Q1071 719 1071 724" />
      <path d="M1431 475L1453 656" />
      <path d="M802.5 782Q804 797 820.5 804L1063 905.5Q1077 911 1082.5 922" />
      <path d="M1072 796L1101 921" />
      <path d="M1453 728Q1451 743 1437 750L1131 908Q1122 913 1120 922" />
      <g strokeDasharray="2 2">
        <path d="M972 204L915 328L821 530V537" />
        <path d="M1059 366C1052 382 1046 389.5 1030 390L832 395.5C812 396 804 409 802 420" />
        <path d="M1144 538V574" strokeWidth="1.5" />
      </g>
    </g>
    <g fill="none" stroke="#9bb673" strokeWidth="1.2">
      <path d="M971.5 204L996.5 612" />
      <path d="M1058 366Q1057 373 1053 384L971.5 612" />
      <path d="M1143 628C1138 641 1130 638 1115 634.5L965 603Q948 600 945.5 612" />
    </g>
    <path d="M1036 619L1054.5 613.5L1051.5 629.5Z" fill="#a1be78" />

    <path d="M946 40H1024V65Q1024 69 1020 70L985 77L950 70Q946 69 946 65Z" fill="#b8b8b8" />
    <Dot x={985.3} y={84} />
    <NullNode x={971.3} y={166.8} />

    <path d="M1011 322Q1032 315 1058 320Q1088 327 1107 321V351Q1088 358 1060 353Q1030 348 1011 352Z" fill="#cfcfcf" stroke="#a8a8a8" />
    <path d="M1024 319.5L1021 349M1038.5 318.5L1035 350M1083 325L1079.5 355M1096.5 324L1093 355" stroke="#777" strokeWidth="1.1" />
    <path d="M1047 343Q1049 337 1055 337L1071 335Q1070 341 1061 344Q1050 346 1047 343Z" fill="#b8961a" />
    <path d="M1050.5 329Q1051 325 1056 325Q1060 325 1061 329L1069 332Q1072 336 1068 339L1055 341Q1051 338 1054 334Q1050 333 1050.5 329Z" fill="#cfab1f" />
    <circle cx="1055" cy="328.5" r="2.3" fill="#e6cd4e" />
    <path d="M1055 341Q1058 336 1064 336Q1068 337 1068 339L1061 341.5Z" fill="#14110a" />
    <path d="M1061 341L1070 340V345L1065 346L1060.5 349L1062 345Z" fill="#efefef" stroke="#777" strokeWidth="0.7" />
    <Dot x={1029.5} y={310.5} />
    <Dot x={1049} y={312} />
    <Dot x={1068.5} y={315} />
    <Dot x={1088} y={317} />
    <Dot x={1058.7} y={361} />
    <Padlock x={1127} y={359} />
    <Clock x={1149} y={359} />

    <Slab x={802} y={447.3} />
    <Scatter x={802.5} y={447.8} />
    <Dot x={801.7} y={424.5} />
    <Dot x={801.7} y={470} />
    <Clock x={871} y={469.7} />

    <path d="M762 549H849Q854 549 853 553L847 574Q845 578.5 840 578.5H755Q750 578.5 751 574.5L757 553Q758 549 762 549Z" fill="#cfcfcf" stroke="#b4b4b4" />
    <path d="M772 550L764 578M786 550L778 578M828 550L820 578M842 550L834 578" stroke="#777" strokeWidth="1.1" />
    <path d="M792 553L813 552L812 573L794 574Z" fill="#e9923b" stroke="#b08a50" strokeWidth="1.2" />
    <path d="M796 556L801 558.5L802.5 555L804 558.5L809 555.5L807 562L811 563L807 565L810 571L804.5 568.5L803 572L801 568.5L797 571L799 565L795.5 563L799 561.5Z" fill="#c22c16" />
    <path d="M799 563H807M803 559V567" stroke="#f6ca7a" />
    <g fill="#ead9c8" stroke="#8e6f50" strokeWidth="0.5">
      <circle cx="792" cy="553.5" r="1.5" />
      <circle cx="813" cy="552.5" r="1.5" />
      <circle cx="812" cy="573" r="1.5" />
      <circle cx="794.5" cy="573.5" r="1.5" />
    </g>
    <Dot x={781.7} y={541} />
    <Dot x={821} y={541} />
    <Dot x={801.4} y={586.3} />
    <Clock x={873} y={585.8} />

    <path d="M1109 495.5H1181Q1185 495.5 1187 500L1195 521Q1196 525 1192 525H1097Q1092 525 1093 521L1102 500Q1104 495.5 1109 495.5Z" fill="#cfcfcf" stroke="#b4b4b4" />
    <path d="M1110 496.5L1107 524M1124 496.5L1120.5 524M1168.5 496.5L1165 524M1182 496.5L1179 524" stroke="#777" strokeWidth="1.1" />
    <path d="M1142 501.5Q1139 500 1136 501.5Q1132.5 505 1136 508.5Q1141 511 1144.5 505Q1148.5 498.5 1153 501.5Q1156.5 505.5 1153 509Q1150 510.5 1147 508.5" fill="none" stroke="#c62f38" strokeWidth="2.8" />
    <text x="1144.3" y="520.5" textAnchor="middle" fontSize="10.5" fontWeight="bold" fill="#e2e2e2" stroke="#555" strokeWidth="0.8" fontFamily="Liberation Sans">VDB</text>
    <Dot x={1128} y={487} />
    <Dot x={1159.5} y={487} />
    <Dot x={1144} y={533} />
    <Clock x={1216} y={532.8} />

    <Slab x={1144} y={600.3} />
    <Scatter x={1144.5} y={600.8} />
    <Dot x={1144} y={578} />
    <Dot x={1144} y={623.3} />
    <Clock x={1213} y={622.8} />

    <rect x="922" y="623.5" width="99" height="31" rx="5" fill="#cfcfcf" stroke="#111" strokeWidth="4" />
    <path d="M1009 625H1015Q1019 625 1019 629V649Q1019 653 1015 653H1005.5Z" fill="#00a8f0" />
    <path d="M936.5 625L933.5 653.5M950.5 625L947.5 653.5M995 625L992 653.5M1008.5 625L1005.5 653.5" stroke="#777" strokeWidth="1.1" />
    <rect x="921.5" y="622.8" width="99.5" height="32" rx="6" fill="none" stroke="#f5cd12" strokeWidth="2" />
    <Tube x={971.5} y={639} />
    <Dot x={945} y={616.3} />
    <Dot x={971} y={616.3} />
    <Dot x={997.5} y={616.3} />
    <Dot x={971} y={661.7} />
    <Padlock x={1040} y={662} />
    <Clock x={1061} y={661.7} />

    <Slab x={1431} y={447.3} />
    <ellipse cx="1431" cy="447" rx="12" ry="12.5" fill="#a09758" />
    <g fill="#e6dc7c">
      {[-10, -6, -2, 2, 6, 10].map((dy) =>
        [-8, -4, 0, 4, 8]
          .filter((dx) => dx * dx + dy * dy < 135)
          .map((dx) => <circle key={`${dx}${dy}`} cx={1431 + dx} cy={447 + dy} r="1.65" />)
      )}
    </g>
    <Dot x={1431} y={424.5} />
    <Dot x={1431} y={470} />
    <Padlock x={1500} y={470} />

    <NullNode x={1453.3} y={691.3} />
    <NullNode x={801.8} y={745.3} />
    <NullNode x={1071.3} y={759.2} />
    <Clock x={1026} y={189} />

    <path d="M1072 932Q1101 920 1130 932" fill="none" stroke="#b5b5b5" strokeWidth="11" strokeLinecap="round" />
    <path d="M1054 944L1096 934Q1101 932.5 1106 934L1148 944Q1154 946 1154 950V957Q1154 961 1148 963L1106 974Q1101 975.5 1096 974L1054 963Q1048 961 1048 957V950Q1048 946 1054 944Z" fill="#c9fdaf" />
    <path d="M1067 942L1064 966M1081 938L1078 969M1124 939L1121 970M1138 943L1135 966" stroke="#6f8b62" strokeWidth="1.1" />
    <rect x="1089" y="953" width="24" height="8" rx="2" fill="#8f978d" stroke="#5c6658" strokeWidth="0.8" />
    <rect x="1099" y="954" width="13" height="6" fill="#a9afa7" stroke="#4e554c" strokeWidth="0.7" />
    <path d="M1092 957H1098" stroke="#222" strokeWidth="1.5" />
    <circle cx="1095.5" cy="949.5" r="1.6" fill="#5e7c55" />
    <circle cx="1100.8" cy="949.5" r="1.6" fill="#5e7c55" />
    <circle cx="1106" cy="949.5" r="1.6" fill="#c9542b" />
    <text x="985.5" y="65" textAnchor="middle" fontSize="19.8" fill="#222" fontFamily="Noto Sans CJK SC">1</text>
  </Wires>
);

const LABELS: { x: number; b: number; t: string; tone?: "dim" | "ctx" }[] = [
  { x: 1035, b: 65.2, t: "Sub-Network Input #1" },
  { x: 1035, b: 92.6, t: "rest1" },
  { x: 1226, b: 95, t: "Geometry", tone: "ctx" },
  { x: 1015, b: 151.6, t: "Null", tone: "dim" },
  { x: 1015, b: 174.6, t: "INPUT_GEO" },
  { x: 1117, b: 344.4, t: "attribwrangle1" },
  { x: 860, b: 454.6, t: "scatter1" },
  { x: 863, b: 569.6, t: "attribinterpolate1" },
  { x: 1205, b: 517.6, t: "vdbfrompolygons1" },
  { x: 1202, b: 606.7, t: "scatter2" },
  { x: 1029, b: 646.4, t: "pointdeform1" },
  { x: 1489, b: 454.3, t: "pointsfromvolume1" },
  { x: 1496.5, b: 676.6, t: "Null", tone: "dim" },
  { x: 1497, b: 698.6, t: "OUT_VOLUME_SCATTER2" },
  { x: 844.5, b: 730.6, t: "Null", tone: "dim" },
  { x: 845, b: 751.7, t: "OUT_SCATTER" },
  { x: 1114, b: 744.6, t: "Null", tone: "dim" },
  { x: 1115, b: 765.6, t: "OUT_VDB_SCATTER1" },
  { x: 1163, b: 959.3, t: "switch1" },
];

/* ---------- parameter controls ---------- */
const SliderTrack = ({ v, ticks }: { v: number; ticks?: boolean }) => (
  <Slider>
    <svg width="198" height="22">
      <rect x="1" y="9" width="192" height="5" rx="2" fill="#050505" />
      {v > 0 && <rect x="1" y="10" width={191 * v} height="3" fill="#1f5391" />}
      {v > 0 && <rect x="1" y="10" width={191 * v} height="1" fill="#4178b8" />}
      {ticks &&
        Array.from({ length: 11 }, (_, i) => <rect key={i} x={1 + i * 19.1} y="15.5" width="1" height="2.5" fill="#777" />)}
      <rect x={1 + 189 * v} y="1" width="5" height="20" fill="#8f8f8f" stroke="#1b1b1b" />
      <rect x={2 + 189 * v} y="2" width="1.3" height="18" fill="#b4b4b4" />
      {v === 1 && <path d="M191 7.5L194.5 10L191 12.5Z" fill="#111" />}
    </svg>
  </Slider>
);
const CheckBox = () => (
  <Check>
    <svg width="12" height="12" viewBox="0 0 12 12">
      <path d="M1 6L4 5.5L5 7.5L10 1.5L11 2L6 11.5H4Z" fill="#f0f0f0" />
    </svg>
  </Check>
);
const ParamPanel = () => (
  <Panel>
    <PanelHead>
      <IconSlot $ml={4} $mt={5}>
        <svg width="19" height="20" viewBox="0 0 19 20">
          <Tube x={8} y={9} k={0.68} />
          <path d="M12 16H18L15 19.5Z" fill="#999" />
        </svg>
      </IconSlot>
      <PanelTitle>Point Deform</PanelTitle>
      <IconSlot $mt={3}>
        <Input $w={211}>pointdeform1</Input>
      </IconSlot>
      <IconSlot $ml={4} $mt={6}>
        <svg width="19" height="19" viewBox="0 0 19 19">
          <circle cx="8" cy="8" r="4" fill="none" stroke="#ddd" strokeWidth="2.6" />
          <circle cx="8" cy="8" r="6" fill="none" stroke="#ddd" strokeWidth="2.6" strokeDasharray="2.3 2.41" />
          <path d="M12.5 15H18.5L15.5 18Z" fill="#999" />
        </svg>
      </IconSlot>
      <IconSlot $ml={5} $mt={6}>
        <svg width="19" height="19" viewBox="0 0 19 19">
          <path d="M4 1.5L2 14H6L7 9.5H9.5L8.5 14H12.5L14.5 1.5H10.5L10 6H7.5L8 1.5Z" fill="#16243c" stroke="#b9cbe2" strokeWidth="1.2" />
          <path d="M12 15H18L15 18Z" fill="#999" />
        </svg>
      </IconSlot>
      <IconSlot $ml={5} $mt={6}>
        <Magnifier />
      </IconSlot>
      <IconSlot $ml={9} $mt={6}>
        <RoundGlyph $italic>i</RoundGlyph>
      </IconSlot>
      <IconSlot $ml={10} $mt={6}>
        <RoundGlyph>?</RoundGlyph>
      </IconSlot>
    </PanelHead>
    <Row $h={22} $mt={4}>
      <Name $w={122.5} $gap={14}>Group</Name>
      <Input $w={246} />
      <SmallButton>
        <Down />
      </SmallButton>
      <IconSlot $ml={8}>
        <svg width="12" height="16" viewBox="0 0 12 16">
          <path d="M1.5 1L11.5 12.5L7 11.5L1.5 14Z" fill="#d9d9d9" />
        </svg>
      </IconSlot>
    </Row>
    <Row $h={22} $mt={3}>
      <Name $w={122.5} $gap={14}>Mode</Name>
      <Combo>
        <span>Capture and Deform</span>
        <ComboStep>
          <svg width="8" height="14">
            <path d="M0.5 6H7.5L4 0ZM0.5 8H7.5L4 14Z" fill="#929292" />
          </svg>
        </ComboStep>
      </Combo>
    </Row>
    <Group $h={101} $mt={4}>
      <Legend>Capture</Legend>
      <Row $h={23} $mt={3}>
        <Name $w={130.5} $gap={14}>Radius</Name>
        <Input $w={74}>0.1</Input>
        <SliderTrack v={0} />
      </Row>
      <Row $h={23} $mt={2}>
        <Name $w={130.5} $gap={14}>Minimum Points</Name>
        <Input $w={74}>1</Input>
        <SliderTrack v={0.09} ticks />
      </Row>
      <Row $h={23} $mt={2}>
        <Name $w={130.5} $gap={14}>Maximum Points</Name>
        <Input $w={74}>100</Input>
        <SliderTrack v={1} ticks />
      </Row>
    </Group>
    <Group $h={114} $mt={2}>
      <Legend>Deform</Legend>
      <Row $h={21} $mt={2}>
        <Name $w={130.5} $gap={14} />
        <CheckBox />
        Rigid Projection
      </Row>
      <Row $h={21}>
        <Name $w={130.5} $gap={14} />
        <CheckBox />
        Recompute Affected Normals
      </Row>
      <Row $h={22} $mt={1}>
        <Name $w={130.5} $gap={14}>Attributes to Transform</Name>
        <Input $w={252}>*</Input>
        <SmallButton>
          <Down />
        </SmallButton>
      </Row>
      <Row $h={21} $mt={2}>
        <Name $w={130.5} $gap={14} />
        <CheckBox />
        Delete Capture Attributes
      </Row>
    </Group>
  </Panel>
);

const PointerTool = ({ k }: { k: number }) => (
  <svg width="20" height="20" viewBox="0 0 20 20">
    {k === 0 && <ellipse cx="7.5" cy="12" rx="6" ry="3.5" fill="none" stroke="#5576a8" strokeWidth="1.8" />}
    {k === 1 && <path d="M0 4L5 7L15 14M6 3L13 17" stroke="#4c74b5" strokeWidth="1.8" />}
    {k === 2 && <path d="M0 5L10 3.5V8L1 9.5Z" fill="#70757a" />}
    {k === 2 && <path d="M3 13L13 11L14 15L4 17Z" fill="#9fb4cc" stroke="#4d6a96" />}
    <path
      d={k === 2 ? "M9 0L15 7L12.5 7L14 10L12 10.5L11 8L9 9Z" : "M5 1L11 8.5L8.5 9L10 12.5L8 13L6.8 10L5 11Z"}
      fill="#eee"
    />
    <path d="M12 15H18.5L15.2 19Z" fill="#9c9c9c" />
  </svg>
);

const MENU: [string, number][] = [
  ["Add", 36],
  ["Edit", 36],
  ["Go", 30],
  ["View", 40],
  ["Tools", 43.5],
  ["Layout", 52],
  ["Help", 61],
];

const SWATCHES = ["#b22", "#e33", "#ea3", "#2a4", "#4b5", "#cd3", "#111", "#37c", "#ddd"];

export default function App() {
  return (
    <>
      <Global />
      <Frame>
        <LeftPane>
          <PathBar $h={24}>
            <PathField $w={514} $top={-4} $ml={-1}>
              <Crumb $w={45} $pl={1}>
                <ObjIcon />
                <CrumbText>obj</CrumbText>
              </Crumb>
              <Chevron />
              <Crumb $w={59} $pl={4}>
                <GeoIcon />
                <CrumbText>geo1</CrumbText>
              </Crumb>
              <Chevron />
              <Crumb $w={90} $pl={6}>
                <BoxIcon />
                <CrumbText>subnet1</CrumbText>
              </Crumb>
              <Drop>
                <Down />
              </Drop>
            </PathField>
            <IconSlot $ml={9} $mt={2}>
              <PinIcon />
            </IconSlot>
            <IconSlot $ml={7} $mt={-1}>
              <TargetIcon />
            </IconSlot>
            <IconSlot $ml={17} $mt={0}>
              <svg width="20" height="19" viewBox="0 0 20 19">
                <path d="M1 3L8 0L15 3V13L9 16.5L1 12Z" fill="#7794ad" />
                <path d="M1 3L9 6V16.5L1 12Z" fill="#a6bac9" />
                <path d="M9 6L15 3V13L9 16.5Z" fill="#4e6b85" />
                <path d="M12 15H19L15.5 19Z" fill="#999" />
              </svg>
            </IconSlot>
            <IconSlot $ml={4} $mt={0}>
              <svg width="20" height="19" viewBox="0 0 20 19">
                <path d="M1.5 4Q1.5 0.5 5 0.5Q8 1 7.5 4L6 7L8 15.5H1Q0 13 3 8Z" fill="#484c50" stroke="#8e9295" />
                <circle cx="11" cy="7" r="5" fill="#4f80bd" />
                <circle cx="9.5" cy="5.5" r="1.7" fill="#bcd3ec" />
                <path d="M12 15H19L15.5 19Z" fill="#999" />
              </svg>
            </IconSlot>
            <IconSlot $ml={3} $mt={0}>
              <svg width="20" height="19" viewBox="0 0 20 19">
                <rect x="0.5" y="1" width="15" height="14.5" fill="#dedede" />
                <path d="M12.5 15.5H19L15.7 19Z" fill="#999" />
              </svg>
            </IconSlot>
          </PathBar>
          <SelectBar>
            <IconSlot $ml={0} $mt={13}>
              <svg width="3" height="7">
                <path d="M0 6L2 0" stroke="#ccc" strokeWidth="1.3" />
              </svg>
            </IconSlot>
            <IconSlot $ml={258} $mt={7}>
              <PointerTool k={0} />
            </IconSlot>
            <IconSlot $ml={13} $mt={7}>
              <PointerTool k={1} />
            </IconSlot>
            <IconSlot $ml={13} $mt={7}>
              <PointerTool k={2} />
            </IconSlot>
            <IconSlot $ml={256} $mt={7}>
              <svg width="18" height="20" viewBox="0 0 18 20">
                <g fill="#5f8ac6">
                  <circle cx="5" cy="3" r="2" />
                  <path d="M2 8Q5 3 8 8ZM9 12Q12 7 15 12ZM2 17Q5 12 8 17Z" />
                  <circle cx="12" cy="7" r="2" />
                  <circle cx="5" cy="12" r="2" />
                </g>
                <path d="M2 8.5H8M9 12.5H15M2 17.5H8" stroke="#c8d8ec" />
                <path d="M11 15H17.5L14.2 19Z" fill="#9c9c9c" />
              </svg>
            </IconSlot>
            <IconSlot $ml={8} $mt={7}>
              <RoundGlyph>?</RoundGlyph>
            </IconSlot>
          </SelectBar>
          <ViewRow>
            <Viewport>
              <View3D />
              <CamRow>
                <CamPill $w={52}>
                  Persp <Down s={6} c="#fff" />
                </CamPill>
                <CamPill $w={61}>
                  No cam <Down s={6} c="#fff" />
                </CamPill>
              </CamRow>
              <Hint>
                <HintLine $x={-1}>
                  t mouse tumbles. Middle pans. Right dollies. Ctrl+Alt+Left box-zooms. Ctrl+Right zooms. Spacebar-Ctrl-Left tilts. Hold L for
                </HintLine>
                <HintLine $x={-4}>ernate tumble, dolly, and zoom.</HintLine>
              </Hint>
            </Viewport>
            <Tools>
              <ToolHead>
                <svg width="7" height="8">
                  <path d="M0 1L6 4L0 7Z" fill="#000" />
                </svg>
              </ToolHead>
              <ToolList items={TOOLS_A} />
              <ToolRule $mt={1} />
              <ToolList items={TOOLS_B} />
              <Tool>
                <ToolText>abc</ToolText>
              </Tool>
              <Tool $gap={2} $on>
                <Glyph n="img" />
              </Tool>
              <ToolRule $mt={5} />
              <Tool $gap={6} $on>
                <Glyph n="pin" />
                <Caret $dark />
              </Tool>
              <ToolRule $mt={229} />
              <Tool $gap={3}>
                <RoundGlyph $italic>i</RoundGlyph>
              </Tool>
              <Tool $gap={2} $on>
                <Glyph n="quad" />
              </Tool>
              <Tool $gap={0}>
                <Glyph n="more" />
              </Tool>
            </Tools>
          </ViewRow>
        </LeftPane>
        <Splitter>
          <svg width="5" height="74">
            <path d="M4 1V8L0.5 4.5ZM1 63V70L4.5 66.5Z" fill="#8a8a8a" />
            <g stroke="#8a8a8a" strokeDasharray="1 2">
              <path d="M0.5 24V44M3.5 24V44" />
            </g>
          </svg>
        </Splitter>
        <RightPane>
          <PathBar $h={32}>
            <IconSlot $ml={6} $mt={8}>
              <svg width="16" height="18" viewBox="0 0 16 18">
                <path d="M0.5 6.5L7 0.5V4H13V9H7V13Z" fill="#c9c9c9" />
                <path d="M12 10L16 13.5L12 17Z" fill="#999" />
              </svg>
            </IconSlot>
            <IconSlot $ml={8} $mt={8}>
              <svg width="14" height="14" viewBox="0 0 14 14">
                <path d="M13.5 6.5L7 0.5V4H1V9H7V13Z" fill="#585858" />
              </svg>
            </IconSlot>
            <PathField $w={1022} $top={3} $ml={10}>
              <Crumb $w={49} $pl={5}>
                <ObjIcon />
                <CrumbText>obj</CrumbText>
              </Crumb>
              <Chevron />
              <Crumb $w={58} $pl={5}>
                <GeoIcon />
                <CrumbText>geo1</CrumbText>
              </Crumb>
              <Chevron />
              <Crumb $w={90} $pl={6}>
                <BoxIcon />
                <CrumbText>subnet1</CrumbText>
              </Crumb>
              <Drop>
                <Down />
              </Drop>
            </PathField>
            <IconSlot $ml={9} $mt={8}>
              <PinIcon />
            </IconSlot>
            <IconSlot $ml={6} $mt={6}>
              <TargetIcon />
            </IconSlot>
          </PathBar>
          <MenuBar>
            <MenuGrip>
              <svg width="6" height="7">
                <path d="M0 6.5H6L3 0Z" fill="#000" />
              </svg>
            </MenuGrip>
            <IconSlot $ml={9} />
            {MENU.map(([t, w]) => (
              <MenuItem key={t} $w={w}>
                {t}
              </MenuItem>
            ))}
            <IconSlot $ml={501}>
              <svg width="16" height="16" viewBox="0 0 16 16">
                <path d="M2 14L12 4" stroke="#c8c8c8" strokeWidth="2.4" />
                <path d="M3 3L13.5 13.5" stroke="#d8d8d8" strokeWidth="2.4" />
                <path d="M10 5Q9 1 13.5 0.5L12 3L13.5 4.5L16 3Q15.5 7 11.5 6.5Z" fill="#d0d0d0" />
                <path d="M0.5 3L3.5 0.5L6 3L3 6Z" fill="#aaa" />
              </svg>
            </IconSlot>
            <IconSlot $ml={10}>
              <svg width="14" height="16" viewBox="0 0 14 16" fill="none" stroke="#b8b8b8" strokeWidth="1.2">
                <path d="M1 1H5M3 1V13.5H7M3 4.5H7M3 9H7" />
                <path d="M7.5 3H11.5V6H7.5ZM7.5 7.5H11.5V10.5H7.5ZM7.5 12H11.5V15H7.5Z" />
              </svg>
            </IconSlot>
            <IconSlot $ml={10}>
              <svg width="14" height="15">
                <rect width="13" height="15" fill="#8c8c8c" />
                <path d="M0 1.7H13M0 6H13M0 10.3H13M0 14H13" stroke="#dedede" strokeWidth="2.6" />
              </svg>
            </IconSlot>
            <IconSlot $ml={27}>
              <svg width="14" height="14">
                <rect width="14" height="14" fill="#f2f2f2" />
                {SWATCHES.map((c, i) => (
                  <rect key={i} x={1 + (i % 3) * 4.3} y={1 + Math.floor(i / 3) * 4.3} width="3.4" height="3.4" fill={c} />
                ))}
              </svg>
            </IconSlot>
            <IconSlot $ml={10}>
              <svg width="15" height="15" viewBox="0 0 15 15">
                <rect x="0.6" y="0.6" width="13.5" height="13.5" fill="#2d2d2d" stroke="#9a9a9a" />
                <path d="M2.5 4H6M8.5 4H12M2.5 7.5H6M8.5 7.5H12M2.5 11H6M8.5 11H12" stroke="#cfcfcf" strokeWidth="1.6" strokeDasharray="2.2 0.6" />
              </svg>
            </IconSlot>
            <IconSlot $ml={26}>
              <svg width="14" height="14" viewBox="0 0 14 14">
                <rect width="14" height="14" fill="#8e8e8e" />
                <path d="M1.5 3H8V6.5H1.5ZM6 8H12.5V11.5H6Z" fill="#333" stroke="#eee" />
              </svg>
            </IconSlot>
            <IconSlot $ml={9}>
              <svg width="15" height="15" viewBox="0 0 15 15">
                <path d="M0.5 0.5H14.5V10L10 14.5H0.5Z" fill="#f1df58" />
                <path d="M10 14.5V10H14.5Z" fill="#a8902b" />
                <path d="M3 4H12M3 6.5H11M3 9H8" stroke="#3b351a" strokeWidth="1.2" />
              </svg>
            </IconSlot>
            <IconSlot $ml={9}>
              <svg width="16" height="16" viewBox="0 0 16 16">
                <rect x="0.5" y="0.5" width="14" height="13" fill="#5b9ad6" stroke="#cfe0ee" />
                <path d="M1 13L6 7L9 10L11 8L14 11V13Z" fill="#2c5f8d" />
                <circle cx="4.5" cy="4.5" r="1.8" fill="#f0e68a" />
                <path d="M12.5 9.5V16M9.5 12.7H15.5" stroke="#fff" strokeWidth="2" />
              </svg>
            </IconSlot>
            <IconSlot $ml={9}>
              <BoxIcon w={15} />
            </IconSlot>
            <IconSlot $ml={25}>
              <Magnifier />
            </IconSlot>
            <IconSlot $ml={8}>
              <svg width="16" height="14" viewBox="0 0 16 14">
                <rect width="16" height="13" fill="#e9e9e9" />
                <path d="M1 7Q8 0 15 7Q8 13 1 7Z" fill="#fff" stroke="#333" />
                <circle cx="8" cy="6.5" r="3" fill="#111" />
              </svg>
            </IconSlot>
          </MenuBar>
          <Canvas>
            {LABELS.map((l, i) => (
              <Label key={i} $x={l.x} $b={l.b} $tone={l.tone}>
                {l.t}
              </Label>
            ))}
            <Network />
            <ParamPanel />
          </Canvas>
        </RightPane>
      </Frame>
    </>
  );
}
